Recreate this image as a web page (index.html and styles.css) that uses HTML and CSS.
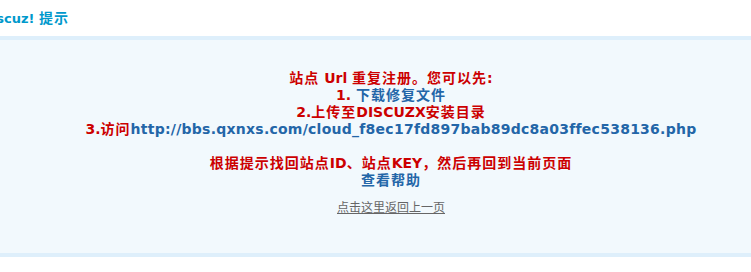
FILE: index.html
```html
<!DOCTYPE html>
<html lang="zh-CN">
<head>
<meta charset="utf-8">
<title>Discuz! 提示</title>
<link rel="stylesheet" href="styles.css">
</head>
<body>
<div class="header">
  <h3 class="title">Discuz! <span class="cn title-cn">提示</span></h3>
</div>
<div class="infobox">
  <h4 class="infotitle"><span class="cn">站点</span> Url <span class="cn">重复注册。您可以先</span>:<br>1. <a class="link" href="#"><span class="cn">下载修复文件</span></a><br>2.<span class="cn">上传至</span>DISCUZX<span class="cn">安装目录</span><br>3.<span class="cn">访问</span><a class="link url" href="#">http://bbs.qxnxs.com/cloud_f8ec17fd897bab89dc8a03ffec538136.php</a><br><br><span class="cn">根据提示找回站点</span>ID<span class="cn">、站点</span>KEY<span class="cn">，然后再回到当前页面</span><br><a class="link" href="#"><span class="cn">查看帮助</span></a></h4>
  <p class="back"><a class="lightlink" href="#">点击这里返回上一页</a></p>
</div>
</body>
</html>
```
FILE: styles.css
```css
html, body {
  margin: 0;
  padding: 0;
  background: #fff;
}
body {
  font-family: "DejaVu Sans", "Noto Sans CJK SC", sans-serif;
  font-size: 12px;
  color: #333;
  overflow: hidden;
}
.header {
  height: 36px;
}
.title {
  margin: 0 0 0 -19px;
  line-height: 36px;
  font-size: 13px;
  font-weight: bold;
  color: #0099cc;
  white-space: nowrap;
}
.title-cn {
  font-size: 14px;
}
.cn {
  letter-spacing: 1px;
}
.infobox {
  margin-right: -31px;
  border-top: 4px solid #deeffb;
  border-bottom: 4px solid #deeffb;
  background: #f2f9fd;
  text-align: center;
  padding: 30px 0 39px;
  height: 144px;
}
.infotitle {
  margin: 0 0 10px;
  font-size: 14px;
  line-height: 17px;
  font-weight: bold;
  color: #cc0000;
  white-space: nowrap;
}
.link {
  color: #2366a8;
  text-decoration: none;
}
.url {
  letter-spacing: 0.25px;
}
.back {
  margin: 0;
  font-size: 12px;
  line-height: 15px;
}
.lightlink {
  color: #666;
  text-decoration: underline;
  font-family: "Noto Sans CJK SC", sans-serif;
}
```
